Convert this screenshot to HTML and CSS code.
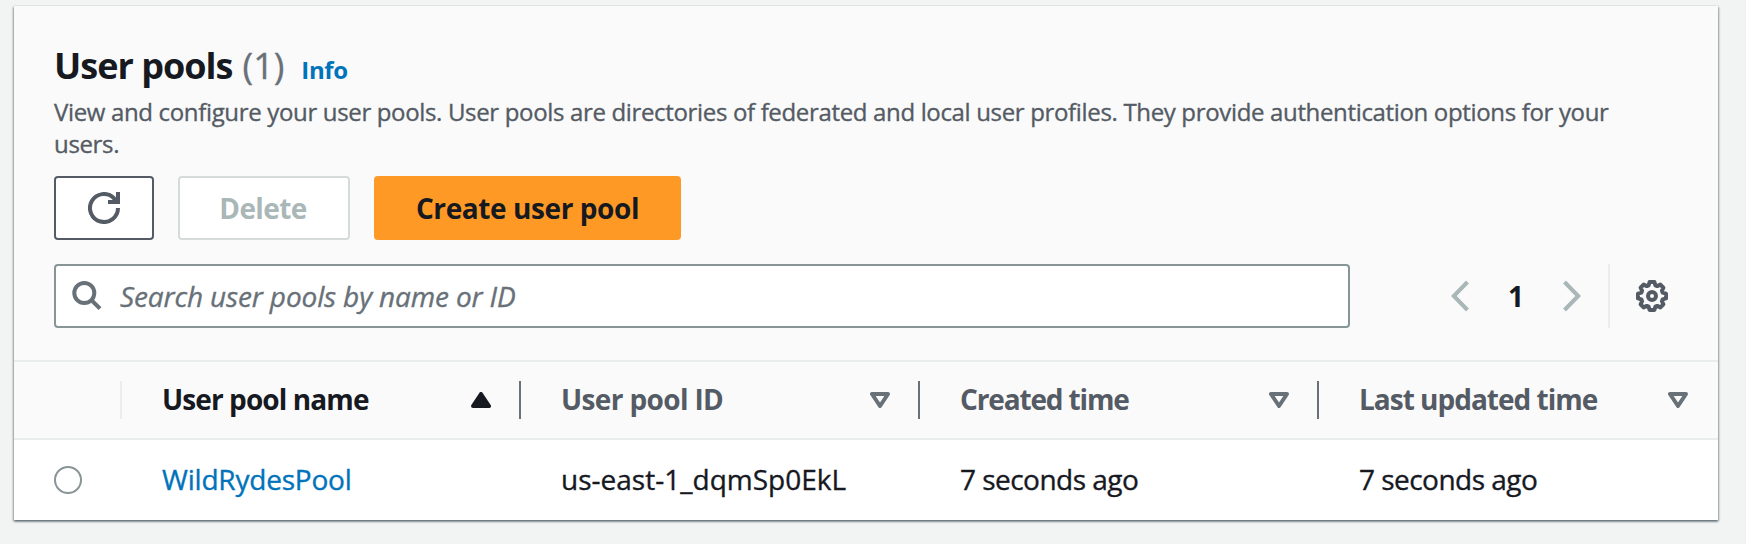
FILE: index.html
```html
<!DOCTYPE html>
<html lang="en">
<head>
<meta charset="utf-8">
<title>User pools</title>
<link rel="stylesheet" href="styles.css">
</head>
<body>
<main class="panel">
  <header class="panel-header">
    <div class="heading">
      <h2 class="title">User pools</h2>
      <span class="count">(1)</span>
      <a class="info">Info</a>
    </div>
    <p class="description">View and configure your user pools. User pools are directories of federated and local user profiles. They provide authentication options for your users.</p>
    <div class="actions">
      <button class="btn btn-refresh" aria-label="Refresh">
        <svg width="32" height="32" viewBox="0 0 32 32" fill="none" stroke="#545b64" stroke-width="4"><path d="M30 16a14 14 0 1 1-4.200-10L28 10"/><path d="M30 0v10H20"/></svg>
      </button>
      <button class="btn btn-delete">Delete</button>
      <button class="btn btn-create">Create user pool</button>
    </div>
    <div class="tools">
      <div class="search">
        <svg width="30" height="30" viewBox="0 0 30 30" fill="none" stroke="#687078" stroke-width="4"><circle cx="12.300" cy="12" r="10"/><path d="M19.300 19L28 27.700"/></svg>
        <span class="placeholder">Search user pools by name or ID</span>
      </div>
      <div class="pagination">
        <svg width="18" height="32" viewBox="0 0 18 32" fill="none" stroke="#aab7b8" stroke-width="4"><path d="M16.500 2L2.800 16l13.700 14"/></svg>
        <span class="page">1</span>
        <svg width="18" height="32" viewBox="0 0 18 32" fill="none" stroke="#aab7b8" stroke-width="4"><path d="M1.500 2L15.200 16L1.500 30"/></svg>
      </div>
      <div class="settings">
        <svg width="32" height="32" viewBox="0 0 32 32" fill="none" stroke="#545b64" stroke-width="4" stroke-linejoin="round"><path d="M13.600 2h4.800l1 3.300 1.800.8 3.200-1.500 3 3-1.500 3.200.8 1.800 3.300 1v4.800l-3.300 1-.8 1.800 1.500 3.200-3 3-3.200-1.500-1.800.8-1 3.300h-4.800l-1-3.300-1.800-.8-3.200 1.500-3-3 1.500-3.200-.8-1.800-3.300-1v-4.800l3.300-1 .8-1.800-1.500-3.200 3-3 3.200 1.500 1.800-.8z"/><circle cx="16" cy="16" r="4"/></svg>
      </div>
    </div>
  </header>
  <div class="row row-head">
    <div class="cell-select"></div>
    <div class="cell sorted"><span class="h-name">User pool name</span><svg width="20" height="16" viewBox="0 0 20 16"><path d="M10 2L18 14H2z" fill="#16191f" stroke="#16191f" stroke-width="4" stroke-linejoin="round"/></svg></div>
    <div class="cell"><span class="h-id">User pool ID</span><svg width="20" height="16" viewBox="0 0 20 16"><path d="M2 2h16l-8 12z" fill="none" stroke="#687078" stroke-width="4" stroke-linejoin="round"/></svg></div>
    <div class="cell"><span class="h-created">Created time</span><svg width="20" height="16" viewBox="0 0 20 16"><path d="M2 2h16l-8 12z" fill="none" stroke="#687078" stroke-width="4" stroke-linejoin="round"/></svg></div>
    <div class="cell"><span class="h-updated">Last updated time</span><svg width="20" height="16" viewBox="0 0 20 16"><path d="M2 2h16l-8 12z" fill="none" stroke="#687078" stroke-width="4" stroke-linejoin="round"/></svg></div>
  </div>
  <div class="row row-body">
    <div class="cell-select"><span class="radio"></span></div>
    <div class="cell"><a class="link">WildRydesPool</a></div>
    <div class="cell"><span class="pool-id">us-east-1_dqmSp0EkL</span></div>
    <div class="cell"><span class="time">7 seconds ago</span></div>
    <div class="cell"><span class="time">7 seconds ago</span></div>
  </div>
</main>
</body>
</html>
```
FILE: styles.css
```css
* { box-sizing: border-box; }
body {
  margin: 0;
  height: 544px;
  padding: 6px 28px 24px 14px;
  background: #f2f3f3;
  color: #16191f;
  font-family: "Open Sans", sans-serif;
  font-size: 28px;
  overflow: hidden;
}
svg { display: block; flex: none; }
.panel {
  height: 514px;
  background: #fff;
  box-shadow: 0 2px 2px 0 rgba(0, 28, 36, .3), 1px 1px 2px 0 rgba(0, 28, 36, .3), -1px 1px 2px 0 rgba(0, 28, 36, .3), 0 -1px 0 0 #eaeded;
}
.panel-header {
  height: 354px;
  padding: 38px 40px 0;
  background: #fafafa;
}
.heading { display: flex; align-items: baseline; height: 44px; line-height: 44px; }
.title { margin: 0; font-size: 36px; line-height: 44px; letter-spacing: -.98px; }
.count { margin-left: 10px; font-size: 36px; color: #687078; }
.info { margin-left: 17px; font-size: 24px; font-weight: 700; letter-spacing: -.4px; color: #0073bb; }
.description {
  height: 64px;
  margin: 8px 0 16px;
  font-size: 24px;
  line-height: 32px;
  letter-spacing: -.34px;
  color: #545b64;
}
.count, .description, .placeholder, .row-body { -webkit-text-stroke: .35px currentColor; }
.actions { display: flex; gap: 24px; }
.btn {
  display: flex;
  align-items: center;
  justify-content: center;
  height: 64px;
  padding: 0;
  border: 2px solid #545b64;
  border-radius: 4px;
  background: #fff;
  font: 700 28px "Open Sans", sans-serif;
}
.btn-refresh { width: 100px; }
.btn-delete { width: 172px; padding: 0 2px 1px 0; border-color: #d5dbdb; color: #aab7b8; letter-spacing: -.6px; }
.btn-create { width: 307px; padding-bottom: 1px; border-color: #ff9926; background: #ff9926; color: #16191f; letter-spacing: -.41px; }
.tools { display: flex; align-items: center; margin-top: 24px; height: 64px; }
.search {
  display: flex;
  align-items: center;
  gap: 18px;
  width: 1296px;
  height: 64px;
  padding-left: 16px;
  border: 2px solid #879596;
  border-radius: 4px;
  background: #fff;
}
.placeholder { font-style: italic; letter-spacing: -.14px; color: #687078; white-space: nowrap; }
.pagination { display: flex; align-items: center; justify-content: space-between; width: 130px; margin-left: 101px; }
.page { font-weight: 700; }
.settings {
  display: flex;
  align-items: center;
  height: 64px;
  margin-left: 27px;
  padding-left: 26px;
  border-left: 2px solid #eaeded;
}
.row { display: grid; grid-template-columns: 108px repeat(4, 399px); height: 80px; }
.row-head {
  align-items: center;
  border: solid #eaeded;
  border-width: 2px 0;
  background: #fafafa;
  font-weight: 700;
  color: #545b64;
}
.cell { display: flex; align-items: center; justify-content: space-between; padding: 0 30px 0 40px; white-space: nowrap; }
.cell > span, .cell > a { padding-bottom: 2px; }
.row-head .cell-select, .row-head .cell { height: 38px; border-right: 2px solid #687078; }
.row-head .cell { padding-right: 28px; }
.row-head .cell-select { border-color: #eaeded; }
.row-head .cell:last-child { border-color: transparent; }
.row-head .sorted { color: #16191f; }
.h-name { letter-spacing: -.9px; }
.h-id { letter-spacing: -.64px; }
.h-created { letter-spacing: -1.15px; }
.h-updated { letter-spacing: -1px; }
.row-body .cell-select { display: flex; align-items: center; padding-left: 40px; }
.radio { width: 28px; height: 28px; border: 2px solid #879596; border-radius: 50%; background: #fff; }
.link { letter-spacing: -.2px; color: #0073bb; }
.pool-id { letter-spacing: .01px; }
.time { letter-spacing: -.53px; }
```
